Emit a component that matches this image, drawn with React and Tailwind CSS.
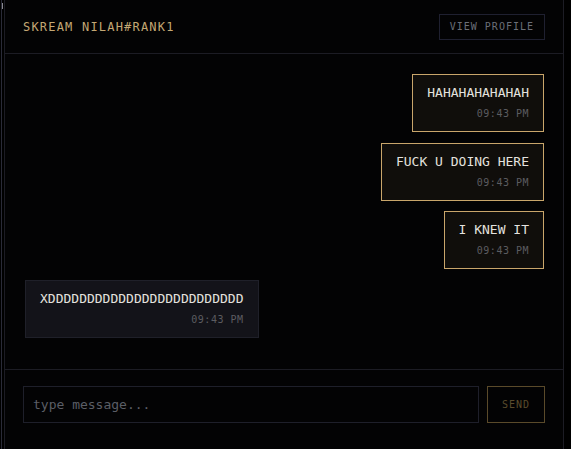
import React from 'react';

const mono = { fontFamily: '"DejaVu Sans Mono", "Liberation Mono", monospace' };

const messages = [
    { text: 'HAHAHAHAHAHAH', time: '09:43 PM', mine: true },
    { text: 'FUCK U DOING HERE', time: '09:43 PM', mine: true },
    { text: 'I KNEW IT', time: '09:43 PM', mine: true },
    { text: 'XDDDDDDDDDDDDDDDDDDDDDDDDD', time: '09:43 PM', mine: false },
];

const Bubble = ({ msg }) => (
    <div className={`flex ${msg.mine ? 'justify-end' : 'justify-start'}`}>
        <div
            className={
                msg.mine
                    ? 'border border-[#c9a66b] bg-[#100e0b] px-[14px] pt-[10px] pb-[10px]'
                    : 'border border-[#1f2029] bg-[#131319] px-[14px] pt-[10px] pb-[10px]'
            }
        >
            <div className="text-[13px] leading-[16px] text-[#e4e2df] whitespace-nowrap">{msg.text}</div>
            <div className="mt-[6px] text-right text-[10px] leading-[14px] tracking-wider text-[#5c5c60]">{msg.time}</div>
        </div>
    </div>
);

export default function App() {
    return (
        <div className="w-[571px] h-[449px] overflow-hidden bg-black flex" style={mono}>
            <div className="w-[1px] shrink-0" />
            <div className="w-[1px] shrink-0 bg-[#2a2b38] relative">
                <div className="absolute left-[1px] top-[3px] w-[1px] h-[6px] bg-[#8a8a90]" />
            </div>
            <div className="w-[2px] shrink-0" />

            <div className="w-[560px] shrink-0 border-l border-r border-[#1c1c24] bg-[#030304] flex flex-col">
                <div className="h-[54px] shrink-0 border-b border-[#1c1c24] px-[18px] flex items-center justify-between">
                    <div className="text-[12px] tracking-widest text-[#c4a874]">SKREAM NILAH#RANK1</div>
                    <button className="border border-[#1f2030] px-[10px] py-[5px] text-[10px] leading-[14px] tracking-widest text-[#6b6f78]">
                        VIEW PROFILE
                    </button>
                </div>

                <div className="h-[315px] shrink-0 pl-5 pr-[19px] pt-5 flex flex-col gap-[10.66px]">
                    {messages.map((m, i) => (
                        <Bubble key={i} msg={m} />
                    ))}
                </div>

                <div className="border-t border-[#1c1c24] px-[18px] pt-4 flex gap-2">
                    <input
                        className="flex-1 h-[37px] border border-[#1e1f2a] bg-transparent pl-[9px] text-[13px] text-[#e8e6e3] placeholder:text-[#5b5e66] outline-none"
                        style={mono}
                        placeholder="type message..."
                    />
                    <button className="h-[37px] w-[58px] border border-[#5a4a2a] text-[10px] tracking-widest text-[#5a4b2c]">
                        SEND
                    </button>
                </div>
            </div>
        </div>
    );
}
